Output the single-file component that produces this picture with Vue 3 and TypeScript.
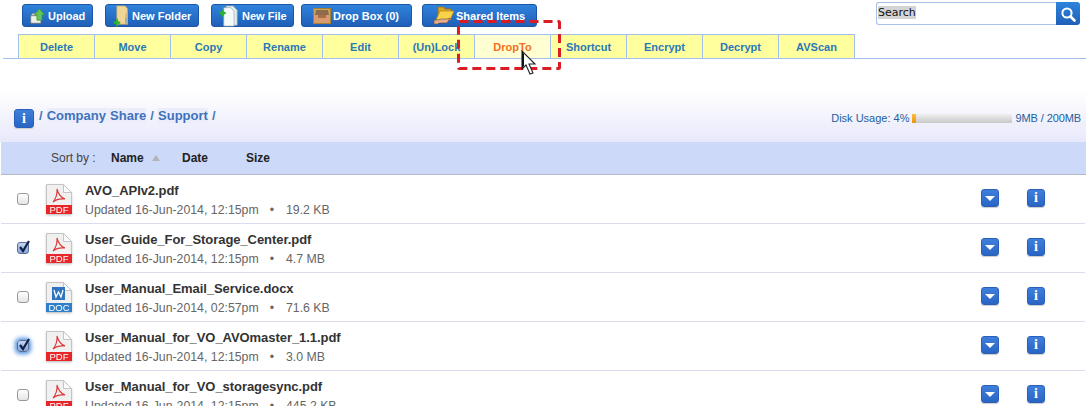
<script setup lang="ts">
interface Row { name: string; meta: string; size: string; kind: 'pdf' | 'doc'; state: '' | 'on' | 'focus' }
const tabs = ['Delete', 'Move', 'Copy', 'Rename', 'Edit', '(Un)Lock', 'DropTo', 'Shortcut', 'Encrypt', 'Decrypt', 'AVScan']
const rows: Row[] = [
  { name: 'AVO_APIv2.pdf', meta: 'Updated 16-Jun-2014, 12:15pm', size: '19.2 KB', kind: 'pdf', state: '' },
  { name: 'User_Guide_For_Storage_Center.pdf', meta: 'Updated 16-Jun-2014, 12:15pm', size: '4.7 MB', kind: 'pdf', state: 'on' },
  { name: 'User_Manual_Email_Service.docx', meta: 'Updated 16-Jun-2014, 02:57pm', size: '71.6 KB', kind: 'doc', state: '' },
  { name: 'User_Manual_for_VO_AVOmaster_1.1.pdf', meta: 'Updated 16-Jun-2014, 12:15pm', size: '3.0 MB', kind: 'pdf', state: 'focus' },
  { name: 'User_Manual_for_VO_storagesync.pdf', meta: 'Updated 16-Jun-2014, 12:15pm', size: '445.2 KB', kind: 'pdf', state: '' },
]
</script>

<template>
  <div class="page">
    <header class="top">
      <nav class="buttons">
        <button class="btn upload">
          <svg width="16" height="16" viewBox="0 0 22 21" preserveAspectRatio="none"><path d="M1 10h14v10H1z" fill="#f0f0e6" stroke="#6e6e6e"/><path d="M1 10l3-3h6v3z" fill="#d8d8cc" stroke="#6e6e6e" stroke-width=".6"/><path d="M13 1l7 8h-3.500v7h-7V9H6z" fill="#62c656" stroke="#3c9334"/></svg>
          Upload
        </button>
        <button class="btn folder">
          <svg width="16" height="22" viewBox="0 0 21 24" preserveAspectRatio="none"><path d="M5 1h11l3 3v17H5z" fill="#efd596" stroke="#c7a765" stroke-width=".8"/><path d="M16 10l3-3v14h-3z" fill="#d9b978"/><rect x="16" y="14" width="2" height="6" fill="#84aed0"/><path d="M1 18h3v-3h2.500v3h3v2.500h-3v3H4v-3H1z" fill="#27b52e"/></svg>
          New Folder
        </button>
        <button class="btn file">
          <svg width="19" height="22" viewBox="0 0 24 25" preserveAspectRatio="none"><path d="M9 1h9l5 5v17H9z" fill="#dfeeee" stroke="#92a4a8" stroke-width=".8"/><path d="M6 3h9l4 4v17H6z" fill="#f6fbfa" stroke="#98a8ac" stroke-width=".8"/><path d="M1 8h2.500V5.500H6V8h2.500v2.500H6V13H3.500v-2.500H1z" fill="#27b52e"/></svg>
          New File
        </button>
        <button class="btn dropbox">
          <svg width="18" height="16" viewBox="0 0 18 16"><rect x=".5" y=".5" width="17" height="15" fill="#cfa553" stroke="#a57f34"/><path d="M3 2h12l1 5H2z" fill="#8c6c4c"/><path d="M1 7h16v8H1z" fill="#d99a6e"/><path d="M5 7h8v3H5z" fill="#a96e48"/></svg>
          Drop Box (0)
        </button>
        <button class="btn shared">
          <svg width="20" height="20" viewBox="0 0 20 20"><path d="M4 1h6l1 2h6v6H4z" fill="#dba326" stroke="#99701a" stroke-width=".8"/><path d="M6 5h14l-4 9H2z" fill="#f9d44a" stroke="#b58a1a" stroke-width=".8"/><path d="M0 14h4l3-1h6l3-1-3 5H5l-1 1H0z" fill="#e6ae8d" stroke="#6d4532" stroke-width=".6"/></svg>
          Shared Items
        </button>
      </nav>
      <form class="search" @submit.prevent>
        <span class="search-field"><mark>Search</mark></span>
        <span class="search-btn">
          <svg width="16" height="16" viewBox="0 0 16 16" fill="none" stroke="#fff" stroke-width="2"><circle cx="7" cy="7" r="4.600"/><path d="M10.500 10.500L14.500 14.500" stroke-linecap="round" stroke-width="2.600"/></svg>
        </span>
      </form>
    </header>

    <div class="tabs">
      <a v-for="t in tabs" :key="t" class="tab" :class="{ active: t === 'DropTo' }">{{ t }}</a>
    </div>

    <section class="crumbs">
      <span class="info big"><i>i</i></span>
      <p class="path">/ <a>Company Share</a> / <a>Support</a> /</p>
      <div class="disk">
        <span>Disk Usage: 4%</span>
        <span class="bar"><span class="fill" :style="{ width: '4%' }"></span></span>
        <span class="used">9MB / 200MB</span>
      </div>
    </section>

    <div class="sort">
      <span class="sort-label">Sort by :</span>
      <b class="sort-name">Name</b>
      <span class="tri"></span>
      <b class="sort-date">Date</b>
      <b class="sort-size">Size</b>
    </div>

    <ul class="list">
      <li v-for="r in rows" :key="r.name" class="row">
        <span class="check" :class="r.state">
          <svg v-if="r.state" width="14" height="14" viewBox="0 0 14 14" fill="none"><path d="M3 7l3 4 6-10" stroke="#12204a" stroke-width="2.200"/></svg>
        </span>
        <svg class="doc" width="26" height="32" viewBox="0 0 26 32">
          <path d="M.5.5h17l8 8V30H.5z" fill="#f0f0f0" stroke="#c4c4c4"/>
          <path d="M17.500.5V8.500h8z" fill="#fbfbfb" stroke="#c4c4c4"/>
          <template v-if="r.kind === 'pdf'">
            <path d="M11 5c1 4 3 8 8 10-4-.5-9 .5-12 3 2.500-3 4.500-7 4-13z" fill="none" stroke="#dd3a3a" stroke-width="1.100"/>
            <rect y="21" width="26" height="9" fill="#e8262a"/>
          </template>
          <template v-else>
            <rect x="6" y="5" width="13" height="13" fill="#2f74bd"/>
            <path d="M8 8l2 7 2.500-5 2.500 5 2-7" fill="none" stroke="#fff" stroke-width="1.300"/>
            <rect y="21" width="26" height="9" fill="#2f80c8"/>
          </template>
          <text x="13" y="29" text-anchor="middle" class="doc-label">{{ r.kind === 'pdf' ? 'PDF' : 'DOC' }}</text>
        </svg>
        <div class="text">
          <div class="name">{{ r.name }}</div>
          <div class="meta"><span>{{ r.meta }}</span><span class="dot">•</span><span>{{ r.size }}</span></div>
        </div>
        <span class="action down"><i class="arrow"></i></span>
        <span class="info"><i>i</i></span>
      </li>
    </ul>

    <svg class="callout" width="106" height="52" viewBox="0 0 106 52"><rect x="1.500" y="1.500" width="101" height="47" rx="1" fill="none" stroke="#dc1c24" stroke-width="3" stroke-dasharray="9 5"/></svg>
    <svg class="cursor" width="16" height="26" viewBox="0 0 16 26"><path d="M1 1v18l4-4 4 9 3-1-4-9h6z" fill="#fff" stroke="#222" stroke-width="1.100"/><path d="M1 1v17l2-2V4z" fill="#111"/></svg>
  </div>
</template>

<style>
html, body { margin: 0; background: #fff; overflow: hidden; }
</style>

<style scoped>
.page { position: relative; width: 1086px; height: 406px; overflow: hidden; background: #fff; font-family: "Liberation Sans", Arial, sans-serif; }
.top { display: flex; justify-content: space-between; height: 34px; padding: 2px 6px 0 22px; box-sizing: border-box; }
.buttons { display: flex; padding-top: 2px; height: 23px; }
.btn { display: flex; align-items: center; justify-content: flex-start; box-sizing: border-box; height: 23px; padding: 0; border: 1px solid #1c56a6; border-radius: 3px; background: linear-gradient(#2f83dc, #1f5fb8); color: #fff; font: bold 11px "Liberation Sans", Arial, sans-serif; white-space: nowrap; }
.upload { width: 71px; margin-right: 12px; padding-left: 7px; gap: 2px; }
.folder { width: 94px; margin-right: 12px; padding-left: 7px; gap: 3px; }
.file { width: 83px; margin-right: 7px; padding-left: 7px; gap: 4px; }
.dropbox { width: 111px; margin-right: 10px; padding-left: 11px; gap: 2px; }
.shared { width: 115px; padding-left: 11px; gap: 2px; }
.search { display: flex; width: 204px; height: 23px; }
.search-field { flex: 1; box-sizing: border-box; border: 1px solid #a8c0e8; border-right: 0; border-radius: 3px 0 0 3px; padding: 1px 0 0 1px; font: 11px/18px "DejaVu Sans", sans-serif; color: #111; }
.search-field mark { background: #d4d4d4; color: #111; }
.search-btn { width: 24px; display: flex; align-items: center; justify-content: center; background: linear-gradient(#2f83dc, #1f5fb8); border-radius: 0 3px 3px 0; }

.tabs { display: flex; height: 25px; margin-left: 3px; padding-left: 15px; border-bottom: 1px solid #a3c0ea; box-sizing: border-box; }
.tab { box-sizing: border-box; width: 76px; height: 24px; flex: none; text-align: center; background: #ffff9d; border-left: 1px solid #a3c0ea; border-top: 1px solid #a3c0ea; font: bold 11px/24px "Liberation Sans", Arial, sans-serif; color: #2a78b8; }
.tab:last-child { width: 77px; border-right: 1px solid #a3c0ea; }
.tab.active { background: #ffffd2; color: #f2701f; }

.crumbs { display: flex; align-items: flex-start; box-sizing: border-box; height: 83px; padding: 50px 5px 0 14px; background: linear-gradient(#fff 0, #fff 38%, #e8e8fb 100%); }
.path { margin: 0 0 0 5px; font: bold 13px/14px "Liberation Sans", Arial, sans-serif; color: #4a78b8; word-spacing: .5px; }
.path a { color: #3e72bc; background: #ecedfb; }
.disk { margin-left: auto; display: flex; align-items: center; gap: 3px; padding-top: 3px; font: 11px/13px "Liberation Sans", Arial, sans-serif; color: #225f9c; }
.used { letter-spacing: -.1px; }
.bar { display: block; width: 100px; height: 9px; background: linear-gradient(#f0f0f0, #c8c8c8); }
.fill { display: block; height: 100%; background: linear-gradient(#f8c040, #f09010); }

.sort { display: flex; align-items: center; height: 33px; margin-left: 1px; padding-left: 50px; background: #cdd9f9; border-bottom: 1px solid #b4b9c8; box-sizing: border-box; font: 12px "Liberation Sans", Arial, sans-serif; color: #444; }
.sort b { color: #222; font-size: 12px; }
.sort-label { width: 60px; }
.sort-name { width: 41px; }
.tri { width: 0; height: 0; border: 4px solid transparent; border-top: 0; border-bottom: 6px solid #b4b4b4; margin-right: 22px; }
.sort-date { width: 64px; }

.list { list-style: none; margin: 0; padding: 0; }
.row { position: relative; display: flex; align-items: center; box-sizing: border-box; height: 49px; margin: 0 1px; border-bottom: 1px solid #dcdcee; }
.check { box-sizing: border-box; position: relative; flex: none; width: 12px; height: 12px; margin-left: 16px; border: 1px solid #999; border-radius: 3px; background: linear-gradient(#fff, #e4e4e4); }
.check.on, .check.focus { background: linear-gradient(#c6d6f0, #88a4d6); border-color: #5a6f98; }
.check.focus { box-shadow: 0 0 4px 2px #4d8fe0; }
.check svg { position: absolute; left: -1px; top: -3px; }
.doc { flex: none; margin: 1px 0 0 17px; filter: drop-shadow(0 1px 1px #ccc); }
.doc-label { font: 9.500px "Liberation Sans", Arial, sans-serif; fill: #fff; }
.text { margin-left: 13px; flex: 1; padding: 2px 0 1px; }
.name { font: bold 13px/16px "Liberation Sans", Arial, sans-serif; color: #333; letter-spacing: -.06px; }
.meta { margin-top: 4px; font: 12.300px/14px "Liberation Sans", Arial, sans-serif; color: #666; }
.dot { margin: 0 12px 0 11px; }
.action, .info { flex: none; display: inline-flex; align-items: center; justify-content: center; box-sizing: border-box; width: 18px; height: 18px; border-radius: 3px; background: linear-gradient(#3f7fdc, #2a65c4); border: 1px solid #2a60ba; box-shadow: 0 1px 1px #ccc; }
.action { margin: -2px 28px 0 0; }
.row .info { margin: -2px 40px 0 0; }
.arrow { width: 0; height: 0; border: 5px solid transparent; border-top: 5px solid #fff; border-bottom: 0; }
.info i { font: bold 14px/16px "Liberation Serif", serif; font-style: normal; color: #fff; }
.info.big { width: 20px; height: 19px; }

.callout { position: absolute; left: 457px; top: 20px; }
.cursor { position: absolute; left: 521px; top: 50px; }
</style>
